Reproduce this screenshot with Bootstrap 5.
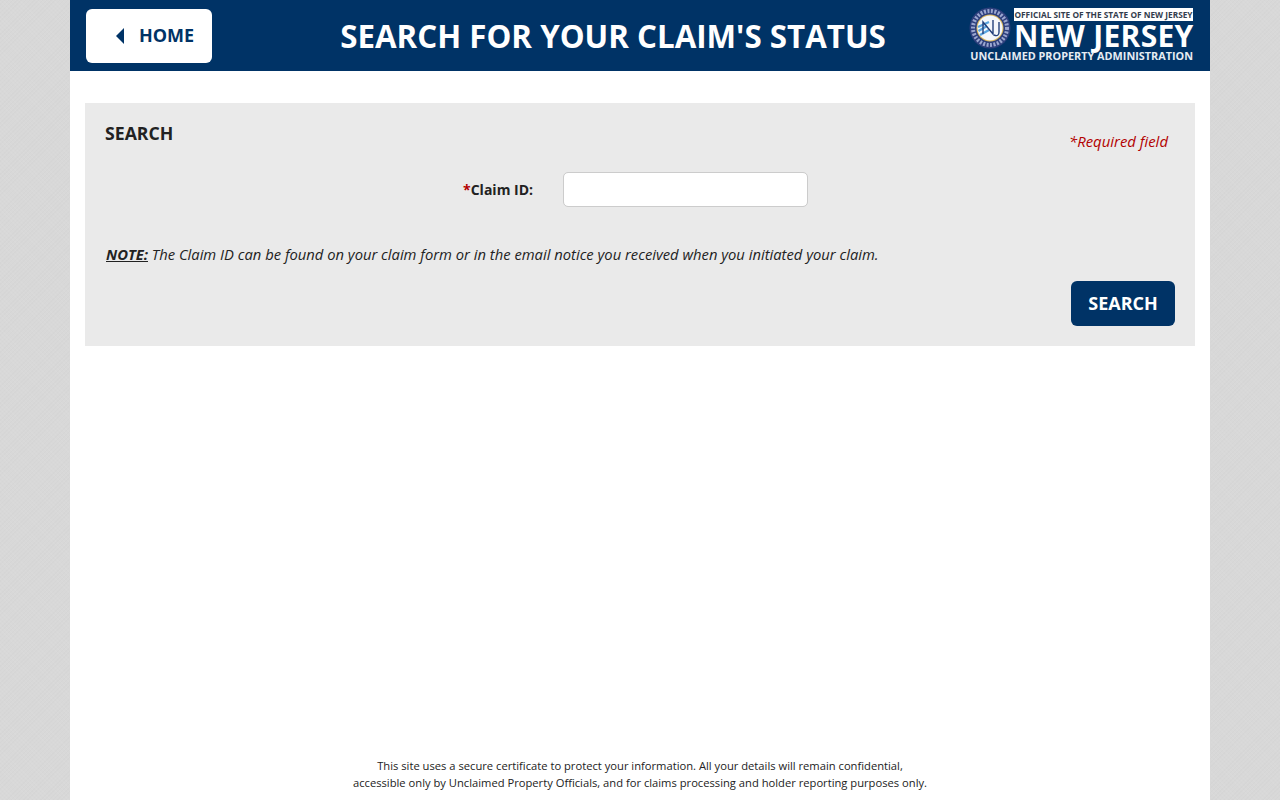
<!DOCTYPE html>
<html lang="en">
<head>
    <meta charset="UTF-8">
    <meta name="viewport" content="width=device-width, initial-scale=1.0">
    <title>Search For Your Claim's Status</title>
    <link href="https://cdn.jsdelivr.net/npm/bootstrap@5.3.0/dist/css/bootstrap.min.css" rel="stylesheet">
    <style>
        html, body {
            height: 100%;
        }
        body {
            font-family: "Open Sans", "Liberation Sans", sans-serif;
            color: #222;
            overflow: hidden;
            background-color: #d8d8d8;
            background-image: repeating-linear-gradient(45deg, rgba(255,255,255,.04) 0 1px, transparent 1px 3px),
                repeating-linear-gradient(-45deg, rgba(0,0,0,.012) 0 1px, transparent 1px 3px);
        }
        .page-wrap {
            width: 1140px;
            height: 800px;
            background: #fff;
        }
        .top-bar {
            height: 71px;
            background: #003366;
            padding: 0 17px 0 16px;
        }
        .home-btn {
            width: 126px;
            height: 54px;
            margin-top: 1px;
            background: #fff;
            color: #003366;
            font-size: 18px;
            font-weight: 700;
            border-radius: 6px;
            border: 0;
            padding: 0 0 2px 30px;
            gap: 15px;
        }
        .home-btn:hover {
            background: #fff;
            color: #003366;
        }
        .home-arrow {
            width: 0;
            height: 0;
            margin-top: 2px;
            border-top: 8px solid transparent;
            border-bottom: 8px solid transparent;
            border-right: 8px solid #003366;
        }
        .page-title {
            font-size: 31.3px;
            font-weight: 700;
            color: #fff;
            line-height: 1;
            margin: 2px 0 0 45px;
        }
        .state-logo {
            width: 224px;
            color: #fff;
        }
        .logo-seal {
            width: 42px;
            height: 42px;
            margin-top: 7px;
        }
        .logo-side {
            width: 179px;
            margin-left: 3px;
            margin-top: 8px;
        }
        .logo-official {
            background: #fff;
            color: #333d4d;
            font-size: 8.3px;
            font-weight: 700;
            line-height: 13px;
            height: 13px;
            white-space: nowrap;
            text-align: center;
        }
        .logo-state {
            font-size: 30px;
            font-weight: 700;
            line-height: 28px;
            margin-top: 1px;
            letter-spacing: .3px;
            white-space: nowrap;
            text-align: right;
        }
        .logo-agency {
            font-size: 10.85px;
            font-weight: 700;
            line-height: 12px;
            white-space: nowrap;
            color: #e6ecf3;
            margin-left: -44px;
            text-align: right;
        }
        .search-panel {
            margin: 32px 15px 0;
            height: 243px;
            background: #eaeaea;
            padding: 19px 20px 20px;
        }
        .panel-title {
            font-size: 17.7px;
            font-weight: 700;
            line-height: 22px;
            margin: 0;
        }
        .required-note {
            font-size: 14.9px;
            font-style: italic;
            color: #b30000;
            line-height: 20px;
            margin: 9px 7px 0 0;
        }
        .claim-row {
            margin-top: 21px;
            height: 35px;
        }
        .claim-label {
            width: 429px;
            padding-right: 1px;
            margin: 0;
            font-size: 14px;
            font-weight: 700;
            text-align: right;
        }
        .claim-label span {
            color: #b30000;
        }
        .claim-input {
            width: 245px;
            height: 35px;
            margin-left: 29px;
            border: 1px solid #ccc;
            border-radius: 5px;
        }
        .claim-note {
            font-size: 14.77px;
            font-style: italic;
            line-height: 20px;
            margin: 37px 0 0 1px;
        }
        .claim-note strong {
            text-decoration: underline;
        }
        .search-btn {
            width: 104px;
            height: 45px;
            margin: 17px 0 0;
            padding: 0;
            background: #003366;
            border: 0;
            border-radius: 6px;
            color: #fff;
            font-size: 18px;
            font-weight: 700;
        }
        .search-btn:hover {
            background: #003366;
            color: #fff;
        }
        .page-foot {
            font-size: 11.2px;
            line-height: 17px;
            color: #222;
            padding-bottom: 9px;
        }
    </style>
</head>
<body>
    <div class="page-wrap mx-auto d-flex flex-column">
        <header class="top-bar d-flex align-items-center justify-content-between">
            <a href="#" class="btn home-btn d-flex align-items-center">
                <span class="home-arrow"></span>
                HOME
            </a>
            <h1 class="page-title">SEARCH FOR YOUR CLAIM'S STATUS</h1>
            <div class="state-logo d-flex align-self-start">
                <svg class="logo-seal flex-shrink-0" viewBox="0 0 42 42" aria-hidden="true">
                    <circle cx="21" cy="21" r="20.5" fill="#2d3f7c"/>
                    <circle cx="21" cy="21" r="17" fill="none" stroke="#9aa6cf" stroke-width="4" stroke-dasharray="2 1.5"/>
                    <circle cx="21" cy="21" r="13.5" fill="#d9b65a"/>
                    <circle cx="21" cy="21" r="12.5" fill="#f4f7fb"/>
                    <path d="M9.5 24 L18 19 M9 20 L20 15 M11 28 L20 23" stroke="#5aa5e0" stroke-width="2.4" fill="none"/>
                    <path d="M14 27 V15 L24 27 V13 M30 15 V25 Q30 30 25 28" stroke="#24407a" stroke-width="1.4" fill="none"/>
                </svg>
                <div class="logo-side">
                    <div class="logo-official">OFFICIAL SITE OF THE STATE OF NEW JERSEY</div>
                    <div class="logo-state">NEW JERSEY</div>
                    <div class="logo-agency">UNCLAIMED PROPERTY ADMINISTRATION</div>
                </div>
            </div>
        </header>

        <main class="search-panel">
            <div class="d-flex justify-content-between align-items-start">
                <h2 class="panel-title">SEARCH</h2>
                <div class="required-note">*Required field</div>
            </div>
            <div class="claim-row d-flex align-items-center">
                <label for="claimId" class="claim-label"><span>*</span>Claim ID:</label>
                <input type="text" class="form-control claim-input" id="claimId">
            </div>
            <p class="claim-note"><strong>NOTE:</strong> The Claim ID can be found on your claim form or in the email notice you received when you initiated your claim.</p>
            <div class="d-flex justify-content-end">
                <button type="button" class="btn search-btn">SEARCH</button>
            </div>
        </main>

        <footer class="page-foot mt-auto text-center">
            This site uses a secure certificate to protect your information. All your details will remain confidential,<br>
            accessible only by Unclaimed Property Officials, and for claims processing and holder reporting purposes only.
        </footer>
    </div>

    <script src="https://cdn.jsdelivr.net/npm/bootstrap@5.3.0/dist/js/bootstrap.bundle.min.js"></script>
</body>
</html>
